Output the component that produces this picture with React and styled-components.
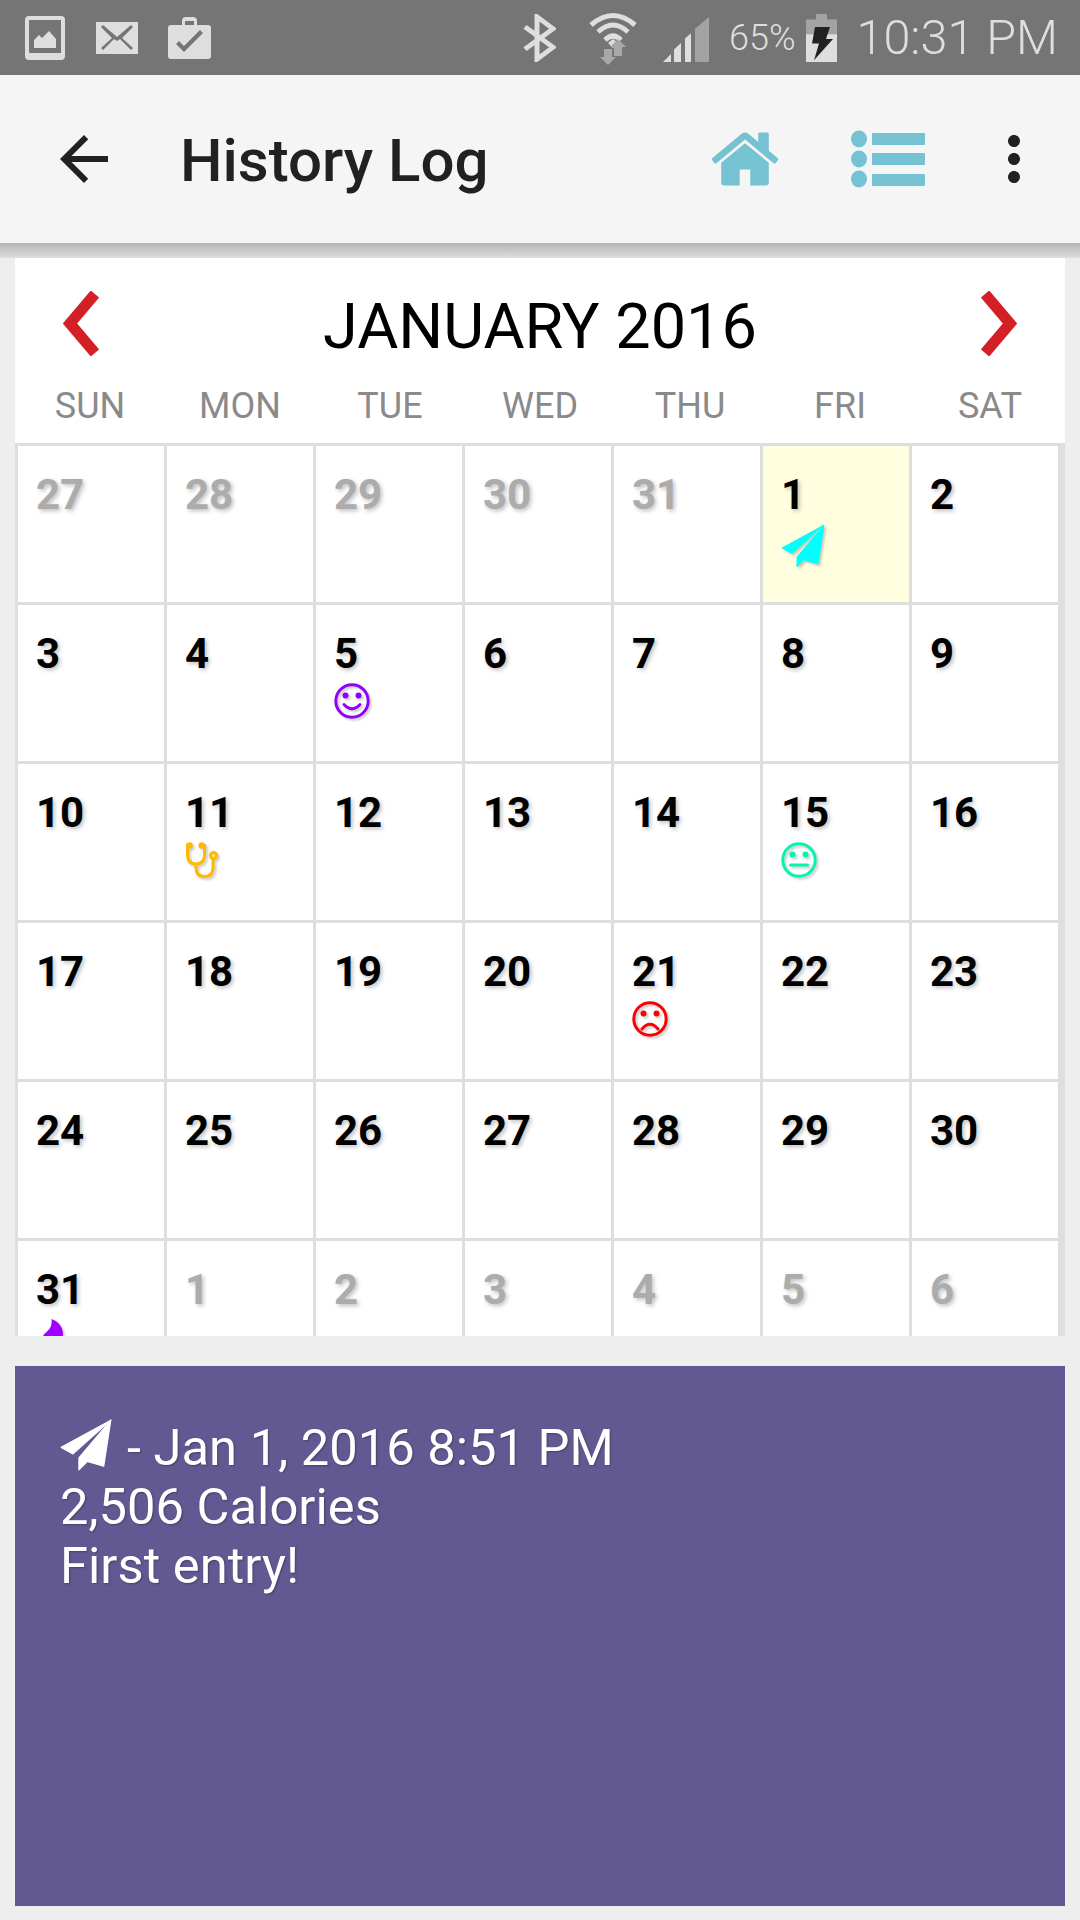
import styled, { createGlobalStyle } from 'styled-components'

const GlobalStyle = createGlobalStyle`
  html, body {
    margin: 0;
    padding: 0;
    background: #eeeeee;
    font-family: Roboto, "Liberation Sans", sans-serif;
  }
  * {
    box-sizing: border-box;
  }
`

const Page = styled.div`
  width: 1080px;
  height: 1920px;
  overflow: hidden;
  background: #eeeeee;
`

const StatusBar = styled.div`
  display: flex;
  align-items: center;
  height: 75px;
  padding: 0 22px 0 25px;
  background: #757575;
  color: #dedede;
`

const StatusIcon = styled.svg`
  flex: none;
  display: block;
  margin-left: ${(props) => props.$left || 0}px;
  margin-top: ${(props) => props.$top || 0}px;
  fill: #dedede;
`

const StatusSpacer = styled.div`
  flex: 1;
`

const BatteryText = styled.span`
  margin-left: 20px;
  font-size: 36px;
  font-weight: 300;
`

const TimeText = styled.span`
  margin-left: 20px;
  font-size: 48.5px;
  font-weight: 300;
`

const AppBar = styled.header`
  display: flex;
  align-items: center;
  height: 168px;
  padding: 0 30px 0 48px;
  background: #f5f5f5;
  color: #212121;
`

const AppBarIcon = styled.svg`
  flex: none;
  display: block;
  margin-left: ${(props) => props.$left || 0}px;
  fill: ${(props) => props.$color || '#212121'};
`

const AppBarTitle = styled.h1`
  flex: 1;
  margin: 3px 0 0 60px;
  font-size: 60px;
  font-weight: 500;
`

const AppBarShadow = styled.div`
  height: 15px;
  background: linear-gradient(#b5b5b5, #dedede);
`

const Calendar = styled.section`
  height: 1078px;
  margin: 0 15px;
  overflow: hidden;
  background: #ffffff;
`

const MonthHeader = styled.div`
  display: flex;
  justify-content: space-between;
  height: 129px;
  padding: 33px 48px 0;
`

const Chevron = styled.svg`
  display: block;
  fill: none;
  stroke: #d32027;
  stroke-width: 11;
`

const MonthTitle = styled.h2`
  margin: 3px 0 0;
  color: #000000;
  font-size: 63px;
  font-weight: 400;
  line-height: 65px;
`

const WeekDays = styled.div`
  display: grid;
  grid-template-columns: repeat(7, 1fr);
  height: 56px;
  padding-top: 1px;
`

const WeekDay = styled.div`
  color: #8a8a8a;
  font-size: 36px;
  line-height: 36px;
  text-align: center;
`

const DayGrid = styled.div`
  display: grid;
  grid-template-columns: repeat(7, 146px);
  grid-auto-rows: 156px;
  gap: 3px;
  padding: 3px 7px 0 3px;
  background: #dedede;
`

const DayCell = styled.div`
  padding: 28px 18px 0;
  background: ${(props) => (props.$selected ? '#ffffe0' : '#ffffff')};
`

const DayNumber = styled.div`
  color: ${(props) => (props.$muted ? '#acacac' : '#000000')};
  font-size: 42px;
  font-weight: 700;
  line-height: 42px;
  text-shadow: 2px 2px 4px rgba(0, 0, 0, 0.25);
`

const DayIcon = styled.svg`
  display: block;
  margin-top: 8px;
  overflow: visible;
  filter: drop-shadow(2px 2px 1px rgba(0, 0, 0, 0.2));
`

const Detail = styled.section`
  height: 540px;
  margin: 30px 15px 0;
  padding: 52px 45px 0;
  background: #625993;
  color: #ffffff;
  font-size: 50.7px;
  line-height: 59px;
  text-shadow: 1px 1px 2px rgba(0, 0, 0, 0.3);
`

const DetailLine = styled.div`
  white-space: nowrap;
`

const DetailIcon = styled.svg`
  display: inline-block;
  width: 52px;
  height: 52px;
  margin-right: 15px;
  vertical-align: -6px;
`

const HOME =
  'M1472 992v480q0 26-19 45t-45 19h-384v-384h-256v384h-384q-26 0-45-19t-19-45v-480q0-1 .5-3t.5-3l575-474 575 474q1 2 1 6zm223-69l-62 74q-8 9-21 11h-3q-13 0-21-7l-692-577-692 577q-12 8-24 7-13-2-21-11l-62-74q-8-10-7-23.5t11-21.5l719-599q32-26 76-26t76 26l244 204v-195q0-14 9-23t23-9h192q14 0 23 9t9 23v408l219 182q10 8 11 21.5t-7 23.5z'

function PlaneShape({ color }) {
  return (
    <>
      <path d="M43 1 L1 24 L11 29.5 Z" fill={color} stroke={color} strokeLinejoin="round" />
      <path d="M43 1 L16 33 L16 43 L23 36 L37 40 Z" fill={color} stroke={color} strokeLinejoin="round" />
    </>
  )
}

function Face({ color, mouth }) {
  return (
    <DayIcon width="36" height="36" viewBox="0 0 36 36">
      <circle cx="18" cy="18" r="16.2" fill="none" stroke={color} strokeWidth="3" />
      <circle cx="11.5" cy="12.5" r="3" fill={color} />
      <circle cx="24.5" cy="12.5" r="3" fill={color} />
      <path d={mouth} fill="none" stroke={color} strokeWidth="3" strokeLinecap="round" />
    </DayIcon>
  )
}

const ICONS = {
  plane: (
    <DayIcon width="44" height="44" viewBox="0 0 44 44">
      <PlaneShape color="#00ffff" />
    </DayIcon>
  ),
  smile: <Face color="#8f00ff" mouth="M10 21.5 Q18 30 26 21.5" />,
  meh: <Face color="#00f5b0" mouth="M9.5 23 H26.5" />,
  frown: <Face color="#ff0000" mouth="M10 28 Q18 18.5 26 28" />,
  stethoscope: (
    <DayIcon width="33" height="36" viewBox="0 0 33 36">
      <path
        d="M4 3.5 H2.5 V12 Q2.5 22 11 22 Q19.5 22 19.5 12 V3.5 H17 M11 22 V26 Q11 34.5 19.5 34.5 Q28 34.5 28 26 V15"
        fill="none"
        stroke="#ffb900"
        strokeWidth="3"
      />
      <circle cx="4.5" cy="3.5" r="3.3" fill="#ffb900" />
      <circle cx="16.7" cy="3.5" r="3.3" fill="#ffb900" />
      <circle cx="28.5" cy="13.5" r="3" fill="#ffe9a8" stroke="#ffb900" strokeWidth="3" />
    </DayIcon>
  ),
  flame: (
    <DayIcon width="36" height="36" viewBox="0 0 36 36">
      <path d="M15.5 0 C22 2 27 8 27 15 C27 28 7 28 7 17 C9 13 17 11 15.5 0Z" fill="#a000ff" />
    </DayIcon>
  )
}

const WEEK_DAYS = ['SUN', 'MON', 'TUE', 'WED', 'THU', 'FRI', 'SAT']

const DAYS = [
  ...[27, 28, 29, 30, 31].map((day) => ({ day, muted: true })),
  ...Array.from({ length: 31 }, (_, index) => ({ day: index + 1 })),
  ...[1, 2, 3, 4, 5, 6].map((day) => ({ day, muted: true }))
]

const DAY_ICONS = { 1: 'plane', 5: 'smile', 11: 'stethoscope', 15: 'meh', 21: 'frown', 31: 'flame' }

function App() {
  return (
    <Page>
      <GlobalStyle />
      <StatusBar>
        <StatusIcon width="40" height="44" viewBox="0 0 40 44">
          <path
            fillRule="evenodd"
            d="M4 0h32a4 4 0 0 1 4 4v36a4 4 0 0 1-4 4H4a4 4 0 0 1-4-4V4a4 4 0 0 1 4-4zM4 4v33h32V4zM9 32v-8l5-5 3 3 7-7 7 8v9z"
          />
        </StatusIcon>
        <StatusIcon $left={31} width="42" height="32" viewBox="0 0 42 32">
          <path
            fillRule="evenodd"
            d="M0 0h42v32H0zM5 5l11 11-11 10 2 2 11-11 3 2 3-2 11 11 2-2-11-10L37 5l-2-2-14 12L7 3z"
          />
        </StatusIcon>
        <StatusIcon $left={30} width="43" height="42" viewBox="0 0 43 42">
          <path
            fillRule="evenodd"
            d="M14 8V4a4 4 0 0 1 4-4h7a4 4 0 0 1 4 4v4h11a3 3 0 0 1 3 3v28a3 3 0 0 1-3 3H3a3 3 0 0 1-3-3V11a3 3 0 0 1 3-3zM17 4v4h9V4zM11 24l-3 3 8 8 19-19-3-3-16 16z"
          />
        </StatusIcon>
        <StatusSpacer />
        <StatusIcon width="33" height="48" viewBox="0 0 33 52" preserveAspectRatio="none">
          <path
            d="M2 14 L30 36 L14 49 V3 L30 16 L2 38"
            fill="none"
            stroke="#dedede"
            strokeWidth="5"
          />
        </StatusIcon>
        <StatusIcon $left={32} width="50" height="54" viewBox="0 0 50 54">
          <path
            d="M3 14 Q25 -5 47 14 M10 21 Q25 7 40 21 M17 29 Q25 21 33 29"
            fill="none"
            stroke="#dedede"
            strokeWidth="5"
          />
          <path d="M20 32 L25 28 L30 32 L25 37z" />
          <path d="M16 38h8v8h4l-8 8-8-8h4zM26 45v-9h-4l8-8 8 8h-4v9z" fill="#a8a8a8" />
        </StatusIcon>
        <StatusIcon $left={25} $top={4} width="46" height="45" viewBox="0 0 46 50" preserveAspectRatio="none">
          <path d="M0 50 L8 41 V50z" />
          <path d="M11 50 V36 L18 29 V50z" />
          <path d="M22 50 V24 L28 18 V50z" />
          <path d="M32 50 V13 L46 0 V50z" fill="#a3a3a3" />
        </StatusIcon>
        <BatteryText>65%</BatteryText>
        <StatusIcon $left={10} width="31" height="48" viewBox="0 0 31 52" preserveAspectRatio="none">
          <path d="M10 0h11v6h10v46H0V6h10z" fill="#a3a3a3" />
          <path d="M0 22h31v30H0z" />
          <path d="M9 14h15l-4 13h7L8 50l5-18H6z" fill="#212121" />
        </StatusIcon>
        <TimeText>10:31 PM</TimeText>
      </StatusBar>

      <AppBar>
        <AppBarIcon width="72" height="72" viewBox="0 0 24 24">
          <path d="M20 11H7.83l5.59-5.59L12 4l-8 8 8 8 1.41-1.41L7.83 13H20v-2z" />
        </AppBarIcon>
        <AppBarTitle>History Log</AppBarTitle>
        <AppBarIcon $color="#74c2d2" width="74" height="74" viewBox="0 0 1792 1792">
          <path d={HOME} />
        </AppBarIcon>
        <AppBarIcon $color="#74c2d2" $left={69} width="74" height="58" viewBox="0 0 74 58">
          <ellipse cx="8" cy="9" rx="8" ry="8.5" />
          <ellipse cx="8" cy="29" rx="8" ry="8.5" />
          <ellipse cx="8" cy="49" rx="8" ry="8.5" />
          <rect x="21" y="3" width="53" height="12" rx="1" />
          <rect x="21" y="23" width="53" height="12" rx="1" />
          <rect x="21" y="44" width="53" height="12" rx="1" />
        </AppBarIcon>
        <AppBarIcon $left={53} width="72" height="72" viewBox="0 0 24 24">
          <path d="M12 8c1.1 0 2-.9 2-2s-.9-2-2-2-2 .9-2 2 .9 2 2 2zm0 2c-1.1 0-2 .9-2 2s.9 2 2 2 2-.9 2-2-.9-2-2-2zm0 6c-1.1 0-2 .9-2 2s.9 2 2 2 2-.9 2-2-.9-2-2-2z" />
        </AppBarIcon>
      </AppBar>
      <AppBarShadow />

      <Calendar>
        <MonthHeader>
          <Chevron width="36" height="65" viewBox="0 0 36 65">
            <path d="M32 3 L7 32.5 L32 62" />
          </Chevron>
          <MonthTitle>JANUARY 2016</MonthTitle>
          <Chevron width="36" height="65" viewBox="0 0 36 65">
            <path d="M4 3 L29 32.5 L4 62" />
          </Chevron>
        </MonthHeader>
        <WeekDays>
          {WEEK_DAYS.map((day) => (
            <WeekDay key={day}>{day}</WeekDay>
          ))}
        </WeekDays>
        <DayGrid>
          {DAYS.map(({ day, muted }, index) => (
            <DayCell key={index} $selected={!muted && day === 1}>
              <DayNumber $muted={muted}>{day}</DayNumber>
              {!muted && ICONS[DAY_ICONS[day]]}
            </DayCell>
          ))}
        </DayGrid>
      </Calendar>

      <Detail>
        <DetailLine>
          <DetailIcon viewBox="0 0 44 44">
            <PlaneShape color="#ffffff" />
          </DetailIcon>
          - Jan 1, 2016 8:51 PM
        </DetailLine>
        <DetailLine>2,506 Calories</DetailLine>
        <DetailLine>First entry!</DetailLine>
      </Detail>
    </Page>
  )
}

export default App
